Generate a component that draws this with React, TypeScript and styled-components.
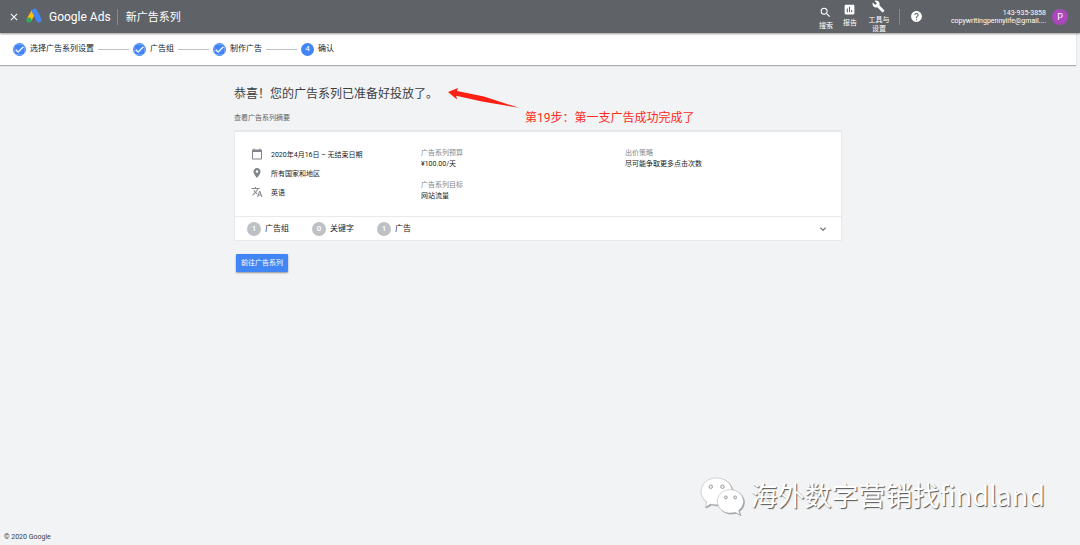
import React from "react";
import styled, { createGlobalStyle } from "styled-components";
import {
  MdAssessment,
  MdBuild,
  MdCalendarToday,
  MdCheck,
  MdClose,
  MdExpandMore,
  MdHelp,
  MdPlace,
  MdSearch,
  MdTranslate,
} from "react-icons/md";

const GlobalStyle = createGlobalStyle`
  * { box-sizing: border-box; }
  body {
    margin: 0;
    background: #f1f3f4;
    color: #3c4043;
    font-family: Roboto, "Noto Sans CJK SC", sans-serif;
    font-size: 7px;
    line-height: 10px;
  }
  button {
    font: inherit;
    border: 0;
    padding: 0;
    background: none;
    color: inherit;
    cursor: pointer;
  }
  h1, h2, p, dl, dt, dd, ul, ol { margin: 0; padding: 0; font-weight: 400; }
  svg { display: block; flex: none; }
`;

const Page = styled.div`
  position: relative;
  display: flex;
  flex-direction: column;
  min-height: 100vh;
`;

const Header = styled.header`
  position: relative;
  display: flex;
  align-items: center;
  height: 33px;
  padding: 0 12px 0 8px;
  background: #5f6368;
  color: #fff;
  box-shadow: 0 1px 2px rgba(0, 0, 0, 0.4);
`;

const CloseButton = styled.button`
  font-size: 12px;
`;

const Brand = styled.a`
  display: flex;
  align-items: center;
  gap: 7px;
  margin: 0 6px;
  color: #fff;
  font-size: 12px;
  line-height: 16px;
  text-decoration: none;
`;

const HeaderDivider = styled.span`
  width: 1px;
  height: 16px;
  background: #85888c;
`;

const PageName = styled.p`
  margin-left: 8px;
  padding-top: 2px;
  font-size: 11px;
  line-height: 16px;
`;

const Tools = styled.nav`
  display: flex;
  align-items: center;
  margin-left: auto;
  height: 33px;
`;

const ToolList = styled.div`
  display: flex;
  align-items: center;
  margin-right: 3px;
`;

const ToolButton = styled.button<{ $width: number; $lift?: number; $drop?: number }>`
  display: flex;
  flex-direction: column;
  align-items: center;
  gap: 3px;
  width: ${(p) => p.$width}px;
  padding-top: ${(p) => p.$drop ?? 0}px;
  padding-bottom: ${(p) => p.$lift ?? 0}px;
  line-height: 9px;
  svg { font-size: 13px; }
`;

const HelpButton = styled.button`
  margin: 0 28px 0 10px;
  font-size: 13px;
`;

const Account = styled.p`
  line-height: 8px;
  text-align: right;
`;

const Avatar = styled.button`
  width: 16px;
  height: 16px;
  margin-left: 6px;
  border-radius: 50%;
  background: #ab47bc;
  font-size: 9px;
`;

const Stepper = styled.ol`
  display: flex;
  align-items: center;
  height: 32px;
  margin-right: 4px;
  padding: 0 13px;
  background: #fff;
  box-shadow: 0 1px 1px rgba(60, 64, 67, 0.4);
  list-style: none;
`;

const Step = styled.li`
  display: flex;
  align-items: center;
  gap: 4px;
  color: #202124;
  font-size: 8px;
  &:not(:last-child)::after {
    content: "";
    width: 31px;
    height: 1px;
    margin-right: 4px;
    background: #bdc1c6;
  }
`;

const StepMark = styled.span`
  display: flex;
  align-items: center;
  justify-content: center;
  width: 13px;
  height: 13px;
  border-radius: 50%;
  background: #4285f4;
  color: #fff;
  font-size: 8px;
  svg { font-size: 11px; stroke: currentColor; stroke-width: 1px; }
`;

const Main = styled.main`
  flex: 1;
  width: 100%;
  padding: 19px 4px 24px 0;
`;

const Content = styled.div`
  position: relative;
  width: 100%;
  max-width: 608px;
  margin: 0 auto;
`;

const Title = styled.h1`
  font-size: 12px;
  line-height: 20px;
`;

const Subtitle = styled.h2`
  margin: 9px 0 7px;
  color: #5f6368;
  font-size: 7px;
  line-height: 10px;
`;

const Card = styled.section`
  border: 1px solid #e8eaed;
  border-top: 2px solid #e6e7e8;
  background: #fff;
`;

const Summary = styled.div`
  display: grid;
  grid-template-columns: 170px 204px 1fr;
  padding: 16px 16px 4px;
  color: #202124;
`;

const Facts = styled.ul`
  display: flex;
  flex-direction: column;
  gap: 7px;
  list-style: none;
`;

const Fact = styled.li`
  display: flex;
  align-items: center;
  gap: 8px;
  height: 12px;
  svg { color: #80868b; font-size: 12px; }
  span { padding-top: 2px; }
`;

const Details = styled.dl`
  line-height: 11px;
  dt { color: #80868b; }
  dd { margin-bottom: 10px; }
`;

const Counts = styled.div`
  display: flex;
  align-items: center;
  gap: 23px;
  height: 24px;
  padding: 0 12px;
  border-top: 1px solid #e8eaed;
`;

const Count = styled.p`
  display: flex;
  align-items: center;
  gap: 4px;
  color: #202124;
  font-size: 8px;
`;

const CountBadge = styled.span`
  width: 14px;
  height: 14px;
  border-radius: 50%;
  background: #bdc1c6;
  color: #fff;
  font-size: 8px;
  font-weight: 500;
  line-height: 14px;
  text-align: center;
`;

const ExpandButton = styled.button`
  margin-left: auto;
  color: #5f6368;
  font-size: 12px;
`;

const PrimaryButton = styled.button`
  height: 18px;
  margin: 13px 2px;
  padding: 0 5px;
  border-radius: 1px;
  background: #4285f4;
  color: #fff;
  box-shadow: 0 1px 2px rgba(0, 0, 0, 0.4);
`;

const Annotation = styled.div`
  position: absolute;
  top: 2px;
  left: 214px;
  display: flex;
  gap: 6px;
  color: #fe2c1e;
  font-size: 12px;
  line-height: 16px;
  white-space: nowrap;
  p { padding-top: 24px; }
`;

const Watermark = styled.div`
  position: absolute;
  right: 35px;
  bottom: 30px;
  display: flex;
  align-items: center;
  gap: 7px;
  color: #fff;
  font-family: "Noto Sans CJK SC", sans-serif;
  font-size: 27px;
  font-weight: 400;
  line-height: 40px;
  text-shadow: 1px 1px 1px #555;
  svg { filter: drop-shadow(1px 1px 0 #9a9c9e); }
`;

const Footer = styled.footer`
  padding: 0 4px 3px;
  color: #3c4043;
`;

const AdsLogo = () => (
  <svg width="16" height="17" viewBox="0 0 16 17" aria-hidden="true">
    <path d="M7.800 3.500 2.900 12" stroke="#fbbc04" strokeWidth="5" />
    <circle cx="2.900" cy="12" r="2.600" fill="#34a853" />
    <path d="M8.600 3.200 13 11.700" stroke="#4285f4" strokeWidth="5.200" strokeLinecap="round" />
  </svg>
);

const Arrow = () => (
  <svg width="71" height="22" viewBox="0 0 71 22" aria-hidden="true">
    <path d="M0 6 10 2 9 5 36 10.500 71 21.800 34 15.500 8.200 9.800 9 13.500Z" fill="#fe2014" />
  </svg>
);

const ChatLogo = () => (
  <svg width="44" height="39" viewBox="0 0 45 40" aria-hidden="true">
    <g fill="#fff" stroke="#b4b6b8" strokeWidth="0.6">
      <path d="M17 2C8 2 1 8 1 16c0 4.500 2.300 8.200 6 11l-2 5 6-3.200c2 .6 4 .8 6 .8 9 0 16-6 16-13.600S26 2 17 2Z" />
      <path d="M31 14c-7.500 0-13.300 5.400-13.300 12S23.500 38 31 38c1.800 0 3.500-.3 5-.8l5 2.500-1.500-4.300c3-2.200 5-5.500 5-9.400 0-6.600-6-12-13.500-12Z" />
    </g>
    <g fill="#eee" stroke="#888" strokeWidth="0.8">
      <circle cx="11" cy="11" r="1.800" />
      <circle cx="23" cy="11" r="1.800" />
      <circle cx="26.500" cy="22" r="1.500" />
      <circle cx="36" cy="22" r="1.500" />
    </g>
  </svg>
);

const steps = ["选择广告系列设置", "广告组", "制作广告", "确认"];
const counts = [
  { value: 1, label: "广告组" },
  { value: 0, label: "关键字" },
  { value: 1, label: "广告" },
];

export default function App() {
  return (
    <Page>
      <GlobalStyle />
      <Header>
        <CloseButton aria-label="关闭"><MdClose /></CloseButton>
        <Brand href="#"><AdsLogo /><span>Google Ads</span></Brand>
        <HeaderDivider />
        <PageName>新广告系列</PageName>
        <Tools>
          <ToolList>
            <ToolButton $width={24} $drop={3}><MdSearch />搜索</ToolButton>
            <ToolButton $width={24} $lift={3}><MdAssessment />报告</ToolButton>
            <ToolButton $width={34}><MdBuild /><span>工具与<br />设置</span></ToolButton>
          </ToolList>
          <HeaderDivider />
          <HelpButton aria-label="帮助"><MdHelp /></HelpButton>
          <Account>143-935-3858<br />copywritingpennylife@gmail....</Account>
          <Avatar>P</Avatar>
        </Tools>
      </Header>
      <Stepper>
        {steps.map((label, i) => (
          <Step key={label}>
            <StepMark>{i < 3 ? <MdCheck /> : i + 1}</StepMark>
            {label}
          </Step>
        ))}
      </Stepper>
      <Main>
        <Content>
          <Title>恭喜！您的广告系列已准备好投放了。</Title>
          <Annotation><Arrow /><p>第19步：第一支广告成功完成了</p></Annotation>
          <Subtitle>查看广告系列摘要</Subtitle>
          <Card>
            <Summary>
              <Facts>
                <Fact><MdCalendarToday /><span>2020年4月16日 – 无结束日期</span></Fact>
                <Fact><MdPlace /><span>所有国家和地区</span></Fact>
                <Fact><MdTranslate /><span>英语</span></Fact>
              </Facts>
              <Details>
                <dt>广告系列预算</dt><dd>¥100.00/天</dd>
                <dt>广告系列目标</dt><dd>网站流量</dd>
              </Details>
              <Details>
                <dt>出价策略</dt><dd>尽可能争取更多点击次数</dd>
              </Details>
            </Summary>
            <Counts>
              {counts.map((c) => (
                <Count key={c.label}><CountBadge>{c.value}</CountBadge>{c.label}</Count>
              ))}
              <ExpandButton aria-label="展开"><MdExpandMore /></ExpandButton>
            </Counts>
          </Card>
          <PrimaryButton>前往广告系列</PrimaryButton>
        </Content>
      </Main>
      <Footer>© 2020 Google</Footer>
      <Watermark><ChatLogo /><span>海外数字营销找findland</span></Watermark>
    </Page>
  );
}
